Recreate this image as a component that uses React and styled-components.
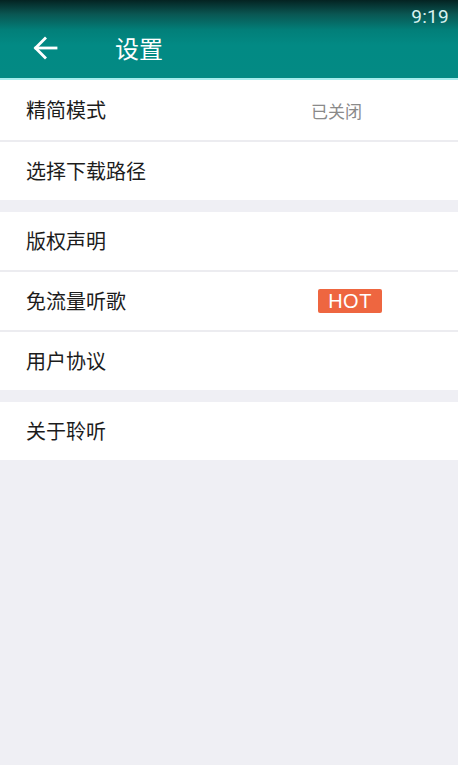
import React from 'react';
import styled, { createGlobalStyle } from 'styled-components';

const GlobalStyle = createGlobalStyle`
  html, body {
    margin: 0;
    padding: 0;
    background: #efeff4;
  }
  body {
    font-family: "Noto Sans CJK SC", "Noto Sans", sans-serif;
  }
`;

const Screen = styled.div`
  width: 458px;
  min-height: 765px;
  background: #efeff4;
  display: flex;
  flex-direction: column;
`;

const Header = styled.header`
  height: 80px;
  border-bottom: 2px solid #a6ecec;
  background: linear-gradient(to bottom, #042322 0px, #0a5652 14px, #027f79 30px, #028a84 45px, #038a84 100%);
  position: relative;
  display: flex;
  align-items: center;
  padding-top: 18px;
  box-sizing: border-box;
`;

const StatusTime = styled.span`
  position: absolute;
  top: 5px;
  right: 9px;
  font-family: Roboto, "Noto Sans", sans-serif;
  font-size: 19px;
  color: #d8f2f0;
  letter-spacing: 0.3px;
`;

const BackButton = styled.button`
  width: 26px;
  height: 26px;
  margin-left: 32px;
  padding: 0;
  border: 0;
  background: none;
  display: flex;
  align-items: center;
  justify-content: center;
`;

const Title = styled.h1`
  margin: 0 0 0 57px;
  font-size: 24px;
  font-weight: 400;
  color: #ffffff;
  line-height: 1;
`;

const Group = styled.section`
  background: #ffffff;
  display: flex;
  flex-direction: column;
  & + & {
    margin-top: ${(p) => p.gap || 13}px;
  }
`;

const Row = styled.div`
  height: ${(p) => p.h || 58}px;
  display: flex;
  align-items: center;
  padding: 0 26px;
  position: relative;
  box-sizing: border-box;
  & + & {
    border-top: 2px solid #ececf0;
    height: ${(p) => p.h || 60}px;
  }
`;

const Label = styled.span`
  font-size: 20px;
  color: #1c1c1c;
  line-height: 1;
`;

const Value = styled.span`
  position: absolute;
  left: 311px;
  font-size: 17px;
  color: #8a8a8a;
  line-height: 1;
`;

const Badge = styled.span`
  position: absolute;
  left: 318px;
  width: 64px;
  height: 24px;
  border-radius: 2px;
  background: #ee6640;
  color: #ffffff;
  font-family: "Liberation Sans", Arial, sans-serif;
  font-size: 20px;
  line-height: 24px;
  text-align: center;
  letter-spacing: 0.5px;
`;

const ArrowLeft = () => (
  <svg width="26" height="26" viewBox="0 0 26 26" fill="none" stroke="#ffffff" strokeWidth="2.8" strokeLinecap="square">
    <path d="M24 13H4" />
    <path d="M13 3.5L3.5 13L13 22.5" />
  </svg>
);

const groups = [
  { gap: 0, items: [{ label: '精简模式', value: '已关闭', h: 60 }, { label: '选择下载路径', h: 58 }] },
  { gap: 13, items: [{ label: '版权声明' }, { label: '免流量听歌', hot: true }, { label: '用户协议' }] },
  { gap: 12, items: [{ label: '关于聆听' }] },
];

export default function App() {
  return (
    <Screen>
      <GlobalStyle />
      <Header>
        <StatusTime>9:19</StatusTime>
        <BackButton aria-label="返回">
          <ArrowLeft />
        </BackButton>
        <Title>设置</Title>
      </Header>
      {groups.map((g, i) => (
        <Group key={i} gap={g.gap}>
          {g.items.map((it) => (
            <Row key={it.label} h={it.h}>
              <Label>{it.label}</Label>
              {it.value && <Value>{it.value}</Value>}
              {it.hot && <Badge>HOT</Badge>}
            </Row>
          ))}
        </Group>
      ))}
    </Screen>
  );
}
